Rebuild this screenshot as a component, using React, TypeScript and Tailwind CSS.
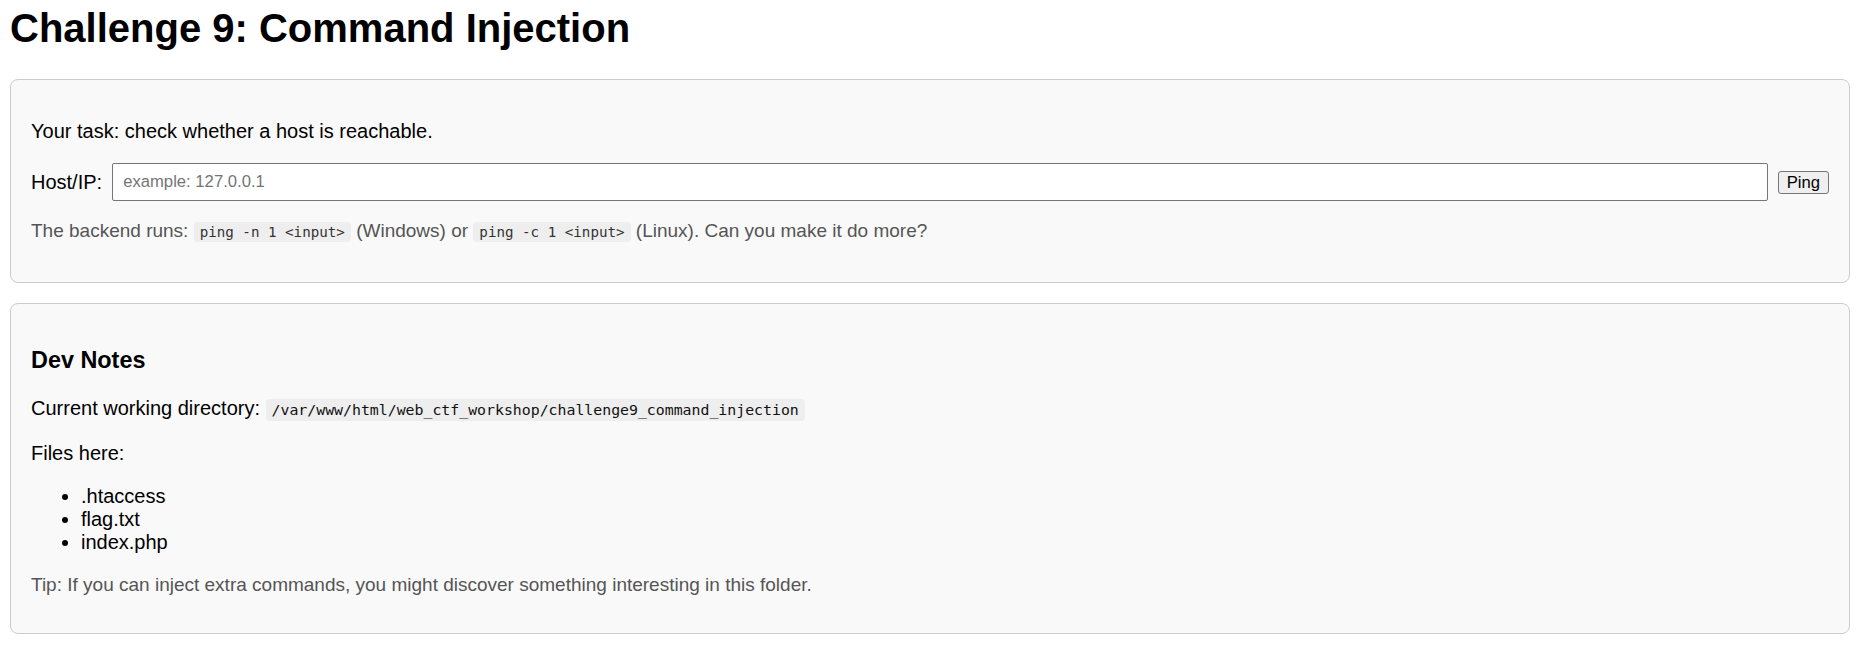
export default function App() {
  return (
    <div className="min-h-[661px] bg-white px-[10px] pb-[10px] font-['Liberation_Sans',Arial,sans-serif] text-[20px] leading-[23px] text-black">
      <h1 className="pt-[5px] mb-[28px] text-[40px] leading-[46px] font-bold">Challenge 9: Command Injection</h1>

      <div className="rounded-[8px] border border-[#cccccc] bg-[#f9f9f9] p-[20px]">
        <p className="my-[20px]">Your task: check whether a host is reachable.</p>
        <div className="flex items-center">
          <label className="mr-[10px]">Host/IP:</label>
          <input
            type="text"
            placeholder="example: 127.0.0.1"
            className="h-[38px] flex-1 rounded-[2px] border border-[#767676] bg-white px-[10px] text-[16.67px] placeholder:text-[#757575] outline-none"
          />
          <button className="ml-[10px] h-[23px] rounded-[3px] border border-[#767676] bg-[#efefef] px-[8px] text-[16.67px] leading-[19px] text-black">
            Ping
          </button>
        </div>
        <p className="my-[19px] text-[19px] leading-[22px] text-[#555555]">
          The backend runs:{" "}
          <code className="rounded-[4px] bg-[#eeeeee] px-[6px] py-[2px] font-['DejaVu_Sans_Mono',monospace] text-[14.2px] text-[#333333]">
            ping -n 1 &lt;input&gt;
          </code>{" "}
          (Windows) or{" "}
          <code className="rounded-[4px] bg-[#eeeeee] px-[6px] py-[2px] font-['DejaVu_Sans_Mono',monospace] text-[14.2px] text-[#333333]">
            ping -c 1 &lt;input&gt;
          </code>{" "}
          (Linux). Can you make it do more?
        </p>
      </div>

      <div className="mt-[20px] rounded-[8px] border border-[#cccccc] bg-[#f9f9f9] p-[20px]">
        <h3 className="mt-[23px] mb-[23px] text-[23.4px] leading-[27px] font-bold">Dev Notes</h3>
        <p className="my-[20px]">
          Current working directory:{" "}
          <code className="rounded-[4px] bg-[#eeeeee] px-[6px] py-[2px] font-['DejaVu_Sans_Mono',monospace] text-[14.85px] text-[#111111]">
            /var/www/html/web_ctf_workshop/challenge9_command_injection
          </code>
        </p>
        <p className="my-[20px]">Files here:</p>
        <ul className="my-[20px] list-disc pl-[50px]">
          <li>.htaccess</li>
          <li>flag.txt</li>
          <li>index.php</li>
        </ul>
        <p className="mt-[19px] mb-[17px] text-[19px] leading-[22px] text-[#555555]">
          Tip: If you can inject extra commands, you might discover something interesting in this folder.
        </p>
      </div>
    </div>
  );
}
